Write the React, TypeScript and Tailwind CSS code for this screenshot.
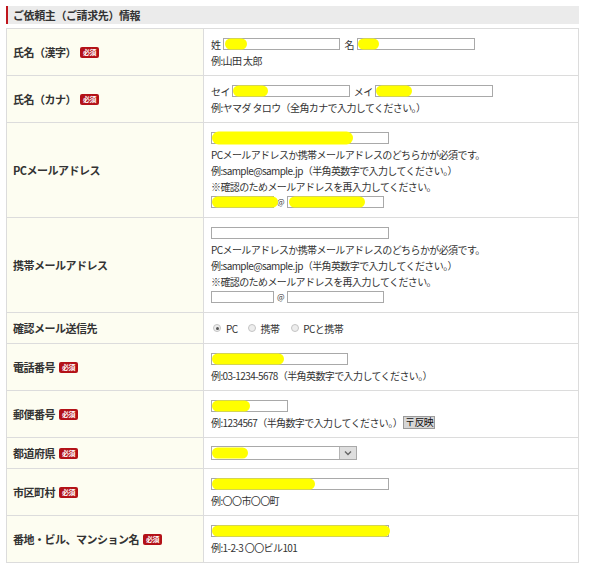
import React from "react";

// ご依頼主情報フォーム（黄色はスクショ上の塗りつぶし）

function Blob({ className = "" }: { className?: string }) {
  return (
    <span
      aria-hidden
      className={`absolute top-1/2 -translate-y-1/2 h-[11px] rounded-full bg-[#ffff00] ${className}`}
    />
  );
}

function Field({ className = "", blob }: { className?: string; blob?: string }) {
  return (
    <span className={`relative inline-block h-[12px] shrink-0 border border-[#a9a9a9] bg-white ${className}`}>
      {blob && <Blob className={blob} />}
    </span>
  );
}

function Badge() {
  return (
    <span className="inline-flex h-[11px] w-[19px] items-center justify-center rounded-[2px] bg-[#b31218] text-[7px] font-bold leading-none tracking-[-0.5px] text-white">
      必須
    </span>
  );
}

function Radio({ checked = false, className = "" }: { checked?: boolean; className?: string }) {
  return (
    <span
      className={`inline-flex h-[8px] w-[8px] shrink-0 items-center justify-center rounded-full border border-[#c4c4c4] bg-[#ededed] ${className}`}
    >
      {checked && <span className="h-[3px] w-[3px] rounded-full bg-[#555]" />}
    </span>
  );
}

function Line({ children, className = "" }: { children?: React.ReactNode; className?: string }) {
  return <div className={`flex h-[16px] items-center whitespace-nowrap ${className}`}>{children}</div>;
}

function Row({
  label,
  required,
  h,
  children,
}: {
  label: string;
  required?: boolean;
  h: string;
  children: React.ReactNode;
}) {
  return (
    <div className={`flex border-b border-[#dcdcdc] ${h}`}>
      <div className="flex w-[197px] shrink-0 items-center gap-[4px] border-r border-[#dcdcdc] bg-[#fdfdf1] pl-[6px] text-[11px] font-bold tracking-[-0.5px] text-[#333]">
        <span>{label}</span>
        {required && <Badge />}
      </div>
      <div className="flex flex-1 flex-col justify-center pl-[7px] text-[10px] tracking-[-0.6px] text-[#333]">
        {children}
      </div>
    </div>
  );
}

function EmailBlock({ filled }: { filled?: boolean }) {
  return (
    <>
      <Line>
        <Field className="w-[178px]" blob={filled ? "left-0 w-[141px] h-[13px]" : undefined} />
      </Line>
      <Line>PCメールアドレスか携帯メールアドレスのどちらかが必須です。</Line>
      <Line>例:sample@sample.jp（半角英数字で入力してください。）</Line>
      <Line>※確認のためメールアドレスを再入力してください。</Line>
      <Line>
        <Field className="w-[63px]" blob={filled ? "left-0 w-[66px]" : undefined} />
        <span className="mx-[3px] text-[8px]">@</span>
        <Field className="w-[97px]" blob={filled ? "left-[1px] w-[76px]" : undefined} />
      </Line>
    </>
  );
}

export default function App() {
  return (
    <div className="min-h-screen w-full bg-white pt-[6px] font-['Noto_Sans_CJK_JP','Noto_Sans',sans-serif] text-[#333]">
      <div className="ml-[6px] flex h-[18px] w-[573px] items-center border-l-2 border-[#c0161d] bg-[#ebebeb] pl-[5px] text-[11px] font-bold tracking-[-0.4px] text-[#333]">
        ご依頼主（ご請求先）情報
      </div>

      <div className="ml-[6px] mt-[4px] w-[573px] border-x border-t border-[#dcdcdc]">
        <Row label="氏名（漢字）" required h="h-[47px]">
          <Line>
            <span>姓</span>
            <Field className="ml-[3px] w-[117px]" blob="left-[1px] w-[22px]" />
            <span className="ml-[4px]">名</span>
            <Field className="ml-[3px] w-[118px]" blob="left-0 w-[21px]" />
          </Line>
          <Line>例:山田 太郎</Line>
        </Row>

        <Row label="氏名（カナ）" required h="h-[47px]">
          <Line>
            <span>セイ</span>
            <Field className="ml-[2px] w-[118px]" blob="left-0 w-[35px]" />
            <span className="ml-[4px]">メイ</span>
            <Field className="ml-[2px] w-[118px]" blob="left-0 w-[36px]" />
          </Line>
          <Line>例:ヤマダ タロウ（全角カナで入力してください。）</Line>
        </Row>

        <Row label="PCメールアドレス" h="h-[95px]">
          <EmailBlock filled />
        </Row>

        <Row label="携帯メールアドレス" h="h-[95px]">
          <EmailBlock />
        </Row>

        <Row label="確認メール送信先" h="h-[31px]">
          <Line className="pl-[2px]">
            <Radio checked />
            <span className="ml-[5px]">PC</span>
            <Radio className="ml-[10px]" />
            <span className="ml-[5px]">携帯</span>
            <Radio className="ml-[12px]" />
            <span className="ml-[4px]">PCと携帯</span>
          </Line>
        </Row>

        <Row label="電話番号" required h="h-[47px]">
          <Line>
            <Field className="w-[137px]" blob="left-0 w-[72px]" />
          </Line>
          <Line>例:03-1234-5678（半角英数字で入力してください。）</Line>
        </Row>

        <Row label="郵便番号" required h="h-[47px]">
          <Line>
            <Field className="w-[77px]" blob="left-0 w-[38px]" />
          </Line>
          <Line>
            例:1234567（半角数字で入力してください。）
            <span className="ml-[1px] inline-flex h-[13px] items-center border border-[#9a9a9a] bg-[#d6d6d6] px-[1px] text-[10px] leading-none text-[#111]">
              〒反映
            </span>
          </Line>
        </Row>

        <Row label="都道府県" required h="h-[31px]">
          <Line>
            <span className="relative flex h-[14px] w-[146px] items-stretch border border-[#a9a9a9] bg-white">
              <Blob className="left-0 w-[36px]" />
              <span className="ml-auto flex w-[17px] items-center justify-center border-l border-[#b5b5b5] bg-[#dedede]">
                <svg width="8" height="6" viewBox="0 0 8 6" fill="none">
                  <path d="M1 1.5 L4 4.5 L7 1.5" stroke="#666" strokeWidth="1.4" />
                </svg>
              </span>
            </span>
          </Line>
        </Row>

        <Row label="市区町村" required h="h-[47px]">
          <Line>
            <Field className="w-[178px]" blob="left-0 w-[103px]" />
          </Line>
          <Line>例:〇〇市〇〇町</Line>
        </Row>

        <Row label="番地・ビル、マンション名" required h="h-[47px]">
          <Line>
            <Field className="w-[178px]" blob="left-0 w-[178px]" />
          </Line>
          <Line>例:1-2-3 〇〇ビル101</Line>
        </Row>
      </div>
    </div>
  );
}
